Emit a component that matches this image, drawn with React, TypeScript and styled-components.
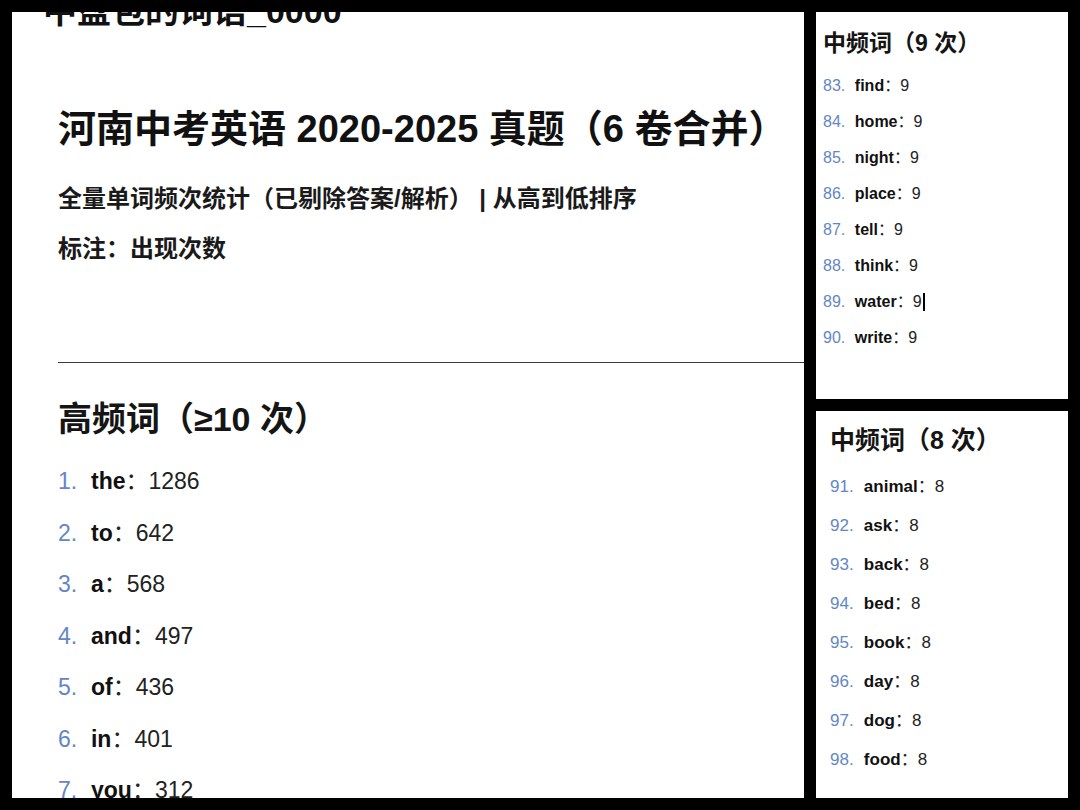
import React from "react";
import styled, { createGlobalStyle } from "styled-components";

const Global = createGlobalStyle`
  html, body { margin: 0; padding: 0; background: #000; }
  body { font-family: "Liberation Sans", "Noto Sans CJK SC", Arial, sans-serif; color: #111; }
`;

const Page = styled.div`
  box-sizing: border-box;
  width: 1080px;
  height: 810px;
  padding: 12px;
  background: #000;
  display: grid;
  grid-template-columns: 792px 252px;
  column-gap: 12px;
  overflow: hidden;
`;

const LeftPanel = styled.section`
  background: #fff;
  height: 786px;
  overflow: hidden;
  padding-left: 46px;
  box-sizing: border-box;
`;

const SideColumn = styled.div`
  display: grid;
  grid-template-rows: 387px 387px;
  row-gap: 12px;
`;

const SidePanel = styled.section<{ $pad: number }>`
  background: #fff;
  overflow: hidden;
  padding-left: ${(p) => p.$pad}px;
  box-sizing: border-box;
`;

const CutTitle = styled.h1`
  margin: -21px 0 0 -15px;
  font-size: 34px;
  line-height: 40px;
  font-weight: 700;
  white-space: nowrap;
`;

const Title = styled.h1`
  margin: 76px 0 0;
  font-size: 38px;
  line-height: 44px;
  font-weight: 700;
  white-space: nowrap;
`;

const Subtitle = styled.p<{ $top: number }>`
  margin: ${(p) => p.$top}px 0 0;
  font-size: 24px;
  line-height: 32px;
  font-weight: 700;
  color: #1a1a1a;
  white-space: nowrap;
`;

const Rule = styled.hr`
  margin: 97px 0 0;
  border: 0;
  border-top: 1px solid #3a3a3a;
  height: 0;
`;

const SectionHead = styled.h2<{ $size: number; $lh: number; $top: number }>`
  margin: ${(p) => p.$top}px 0 0;
  font-size: ${(p) => p.$size}px;
  line-height: ${(p) => p.$lh}px;
  font-weight: 700;
  color: #151515;
  white-space: nowrap;
`;

const List = styled.ol<{ $top: number }>`
  list-style: none;
  margin: ${(p) => p.$top}px 0 0;
  padding: 0;
`;

const Item = styled.li<{ $size: number; $lh: number }>`
  font-size: ${(p) => p.$size}px;
  line-height: ${(p) => p.$lh}px;
  white-space: nowrap;
  display: flex;
  align-items: center;
`;

const Num = styled.span`
  color: #6386c6;
  margin-right: 0.6em;
`;

const Word = styled.b`
  font-weight: 700;
  color: #111;
`;

const Count = styled.span`
  color: #222;
`;

const Caret = styled.span`
  display: inline-block;
  width: 2px;
  height: 1.1em;
  background: #000;
  margin-left: 1px;
`;

type Entry = { n: number; w: string; c: number; caret?: boolean };

const high: Entry[] = [
  { n: 1, w: "the", c: 1286 },
  { n: 2, w: "to", c: 642 },
  { n: 3, w: "a", c: 568 },
  { n: 4, w: "and", c: 497 },
  { n: 5, w: "of", c: 436 },
  { n: 6, w: "in", c: 401 },
  { n: 7, w: "you", c: 312 },
];

const nine: Entry[] = [
  { n: 83, w: "find", c: 9 },
  { n: 84, w: "home", c: 9 },
  { n: 85, w: "night", c: 9 },
  { n: 86, w: "place", c: 9 },
  { n: 87, w: "tell", c: 9 },
  { n: 88, w: "think", c: 9 },
  { n: 89, w: "water", c: 9, caret: true },
  { n: 90, w: "write", c: 9 },
];

const eight: Entry[] = [
  { n: 91, w: "animal", c: 8 },
  { n: 92, w: "ask", c: 8 },
  { n: 93, w: "back", c: 8 },
  { n: 94, w: "bed", c: 8 },
  { n: 95, w: "book", c: 8 },
  { n: 96, w: "day", c: 8 },
  { n: 97, w: "dog", c: 8 },
  { n: 98, w: "food", c: 8 },
];

const Rows = ({ items, size, lh }: { items: Entry[]; size: number; lh: number }) => (
  <>
    {items.map((e) => (
      <Item key={e.n} $size={size} $lh={lh}>
        <Num>{e.n}.</Num>
        <Word>{e.w}</Word>
        <Count>：{e.c}</Count>
        {e.caret && <Caret />}
      </Item>
    ))}
  </>
);

export default function App() {
  return (
    <>
      <Global />
      <Page>
        <LeftPanel>
          <CutTitle>中盘包的词语_0000</CutTitle>
          <Title>河南中考英语 2020-2025 真题（6 卷合并）</Title>
          <Subtitle $top={32}>全量单词频次统计（已剔除答案/解析） | 从高到低排序</Subtitle>
          <Subtitle $top={18}>标注：出现次数</Subtitle>
          <Rule />
          <SectionHead $size={34} $lh={40} $top={36}>高频词（≥10 次）</SectionHead>
          <List $top={17}>
            <Rows items={high} size={23} lh={51.5} />
          </List>
        </LeftPanel>
        <SideColumn>
          <SidePanel $pad={7}>
            <SectionHead $size={23} $lh={30} $top={16}>中频词（9 次）</SectionHead>
            <List $top={10}>
              <Rows items={nine} size={16} lh={36} />
            </List>
          </SidePanel>
          <SidePanel $pad={14}>
            <SectionHead $size={25} $lh={32} $top={13}>中频词（8 次）</SectionHead>
            <List $top={11}>
              <Rows items={eight} size={17} lh={39} />
            </List>
          </SidePanel>
        </SideColumn>
      </Page>
    </>
  );
}
